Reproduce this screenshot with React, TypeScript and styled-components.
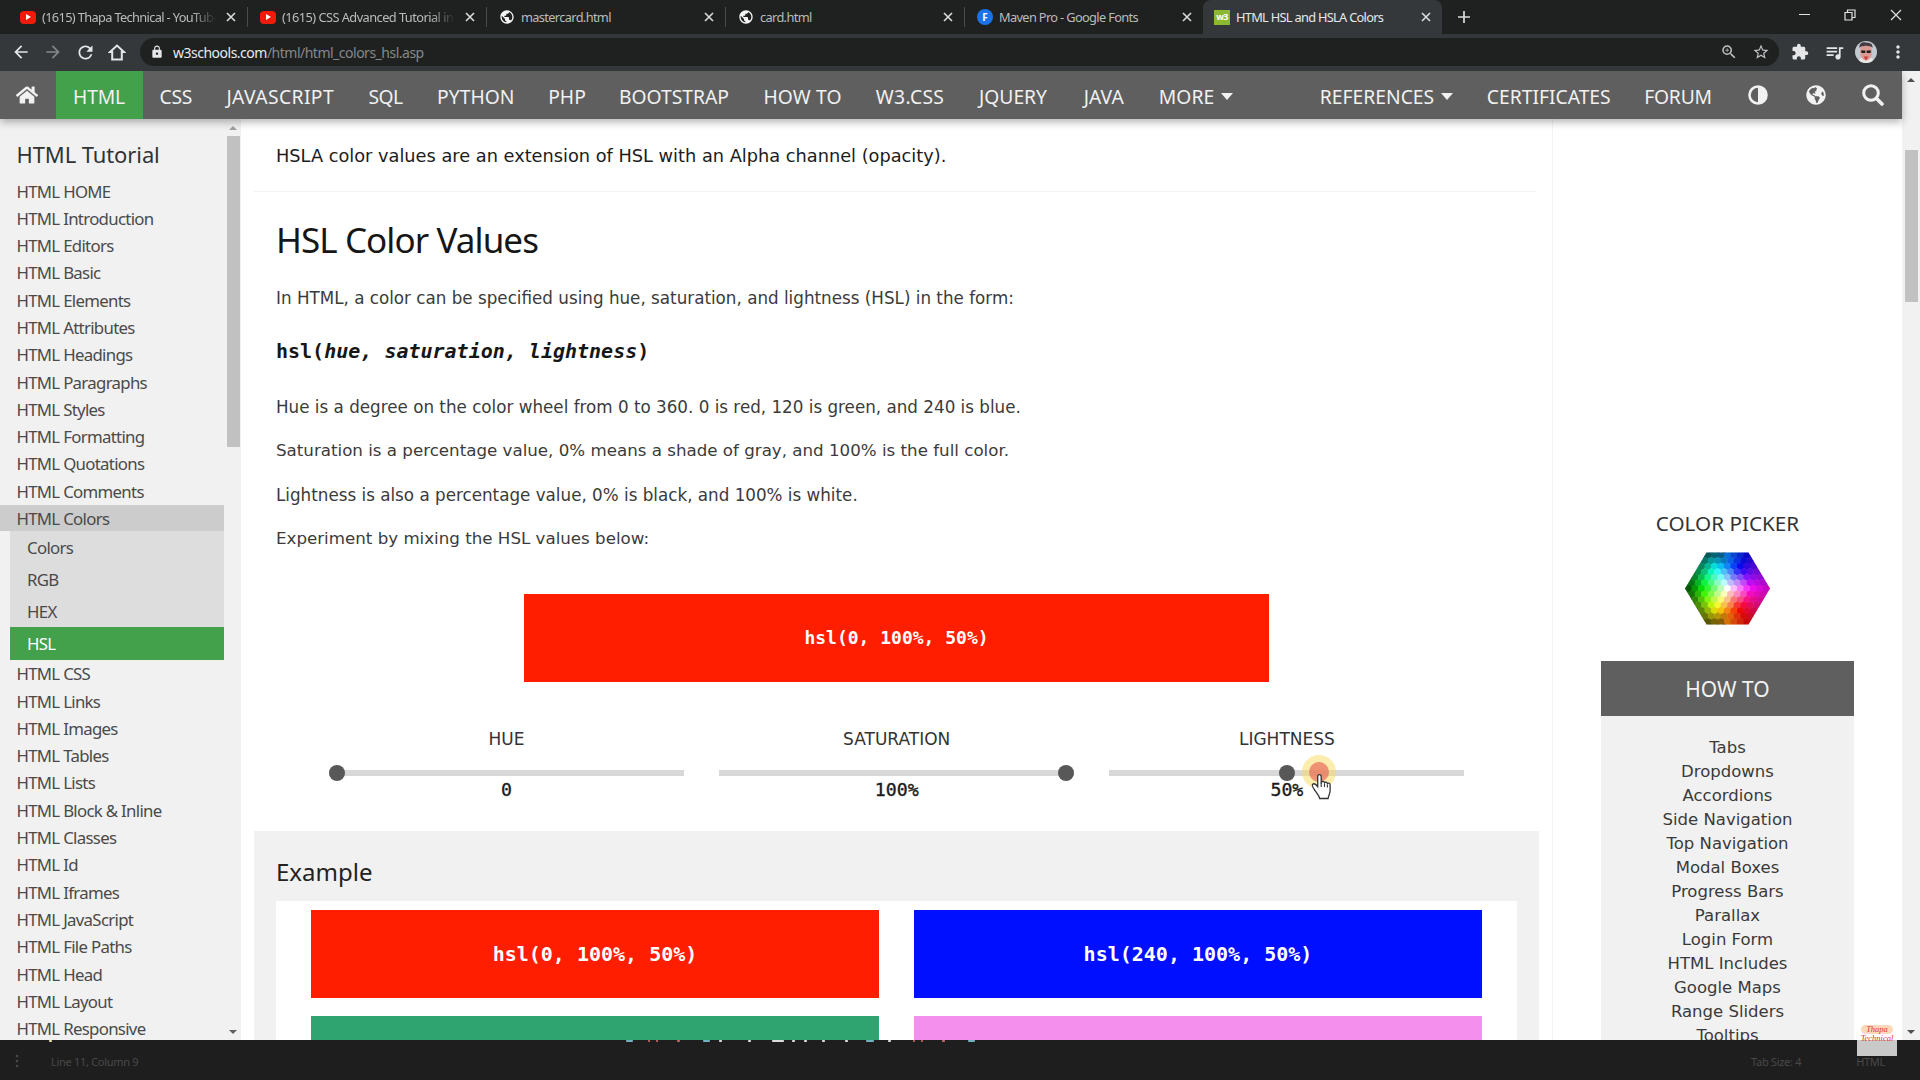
import React from 'react';
import styled, { createGlobalStyle } from 'styled-components';
import {
  MdArrowBack,
  MdArrowForward,
  MdRefresh,
  MdLock,
  MdZoomIn,
  MdStarBorder,
  MdExtension,
  MdQueueMusic,
  MdMoreVert,
  MdPublic,
} from 'react-icons/md';
import { FaHome, FaGlobeAmericas } from 'react-icons/fa';

const ui = '"Noto Sans", "Open Sans", sans-serif';
const body = '"DejaVu Sans", Verdana, sans-serif';
const mono = '"DejaVu Sans Mono", Consolas, monospace';

const Global = createGlobalStyle`
  * { box-sizing: border-box; }
  html, body { margin: 0; padding: 0; background: #1e1e1e; }
  body { overflow: hidden; }
`;

const Screen = styled.div`
  position: relative;
  width: 1920px;
  height: 1080px;
  display: flex;
  flex-direction: column;
  overflow: hidden;
  background: #1e1e1e;
  font-family: ${ui};
`;

/* ---------- browser chrome ---------- */

const TabStrip = styled.div`
  height: 34px;
  flex: none;
  display: flex;
  background: #1f2120;
  color: #c4c7c8;
`;

const Tab = styled.div<{ $active?: boolean; $first?: boolean }>`
  width: ${(p) => (p.$first ? 247 : p.$active ? 239 : 238)}px;
  height: 34px;
  display: flex;
  align-items: center;
  padding: 0 11px 0 ${(p) => (p.$first ? 20 : p.$active ? 11 : 12)}px;
  background: ${(p) => (p.$active ? '#35383b' : 'transparent')};
  border-radius: ${(p) => (p.$active ? '8px 8px 0 0' : '0')};
  color: ${(p) => (p.$active ? '#e6e8e9' : '#b9bcbd')};
`;

const TabIcon = styled.span`
  width: 16px;
  height: 16px;
  flex: none;
  display: flex;
  align-items: center;
  justify-content: center;
`;

const TabTitle = styled.span<{ $fade?: boolean; $ls?: number }>`
  flex: 1;
  margin: 0 10px 1px 6px;
  overflow: hidden;
  white-space: nowrap;
  font-size: 12.8px;
  line-height: 20px;
  letter-spacing: ${(p) => p.$ls ?? -0.65}px;
  ${(p) => p.$fade && 'mask-image: linear-gradient(90deg, #000 86%, transparent 100%);'}
`;

const TabDivider = styled.span`
  width: 1px;
  height: 20px;
  align-self: center;
  background: #484b4d;
`;

const YouTube = styled.span`
  width: 16px;
  height: 13px;
  border-radius: 4px;
  background: #f31a0c;
  display: flex;
  align-items: center;
  justify-content: center;
  &::after {
    content: '';
    border-left: 5px solid #fff;
    border-top: 3px solid transparent;
    border-bottom: 3px solid transparent;
  }
`;

const FontsBadge = styled.span`
  width: 16px;
  height: 16px;
  border-radius: 8px;
  background: #1a73e8;
  color: #fff;
  font: 700 10px/16px ${ui};
  text-align: center;
`;

const W3Badge = styled.span`
  width: 16px;
  height: 15px;
  background: #8cb832;
  color: #fff;
  font: 700 9px/14px ${ui};
  letter-spacing: -0.6px;
  text-align: center;
`;

const NewTab = styled.div`
  width: 44px;
  display: flex;
  align-items: center;
  justify-content: center;
`;

const WindowButtons = styled.div`
  margin-left: auto;
  display: flex;
  height: 29px;
  padding-right: 1px;
`;

const WindowButton = styled.span`
  width: 46px;
  display: flex;
  align-items: center;
  justify-content: center;
`;

const Toolbar = styled.div`
  height: 37px;
  flex: none;
  display: flex;
  align-items: center;
  padding: 0 6px 1px 5px;
  background: #35383b;
  color: #e4e6e8;
`;

const ToolButton = styled.span<{ $w?: number; $dim?: boolean }>`
  width: ${(p) => p.$w ?? 32}px;
  display: flex;
  align-items: center;
  justify-content: center;
  color: ${(p) => (p.$dim ? '#84878a' : 'inherit')};
`;

const Omnibox = styled.div`
  width: 1639px;
  height: 28px;
  margin-left: 7px;
  border-radius: 14px;
  background: #1f2120;
  display: flex;
  align-items: center;
  padding: 0 2px 0 10px;
`;

const Url = styled.span`
  margin-left: 9px;
  font-size: 14px;
  letter-spacing: -0.5px;
  color: #85888a;
  b {
    font-weight: 400;
    color: #e8eaed;
  }
`;

const OmniActions = styled.span`
  margin-left: auto;
  display: flex;
  color: #bfc2c4;
`;

/* ---------- page ---------- */

const Page = styled.div`
  height: 969px;
  flex: none;
  display: flex;
  background: #fff;
  overflow: hidden;
`;

const Site = styled.div`
  width: 1902px;
  display: flex;
  flex-direction: column;
`;

const Nav = styled.nav`
  position: relative;
  z-index: 2;
  height: 48px;
  flex: none;
  display: flex;
  background: #5f5f5f;
  color: #f1f1f1;
  box-shadow: 0 3px 8px rgba(0, 0, 0, 0.3);
`;

const NavItem = styled.span<{ $w: number; $active?: boolean; $ls?: number; $icon?: boolean }>`
  width: ${(p) => p.$w}px;
  height: 48px;
  display: flex;
  align-items: center;
  justify-content: center;
  padding-top: ${(p) => (p.$icon ? 0 : 2)}px;
  background: ${(p) => (p.$active ? '#43a04b' : 'transparent')};
  font-size: 19.3px;
  letter-spacing: ${(p) => p.$ls ?? 0}px;
  white-space: nowrap;
`;

const HomeItem = styled(NavItem)`
  padding-right: 2px;
`;

const Caret = styled.span`
  margin: 1px 0 0 7px;
  border-top: 7px solid #f1f1f1;
  border-left: 6px solid transparent;
  border-right: 6px solid transparent;
`;

const Spacer = styled.span`
  flex: 1;
`;

const Columns = styled.div`
  flex: 1;
  display: flex;
  min-height: 0;
`;

const Sidebar = styled.aside`
  width: 241px;
  flex: none;
  display: flex;
  background: #f1f1f1;
  overflow: hidden;
`;

const Menu = styled.div`
  width: 224px;
  padding-top: 20px;
  flex: none;
`;

const MenuTitle = styled.h2`
  margin: 0;
  padding-left: 16.5px;
  height: 38.5px;
  font: 400 22px/30px ${ui};
  letter-spacing: -0.1px;
  color: #333;
`;

const MenuItem = styled.a<{ $current?: boolean }>`
  display: block;
  height: ${(p) => (p.$current ? 25.5 : 27.3)}px;
  padding-left: 16.4px;
  font-size: 16.8px;
  line-height: 27px;
  letter-spacing: -0.68px;
  white-space: nowrap;
  color: #4a4a4a;
  background: ${(p) => (p.$current ? '#cccccc' : 'transparent')};
`;

const SubMenu = styled.div`
  margin: 0 0 0.5px 10px;
  background: #dddddd;
`;

const SubItem = styled.a<{ $active?: boolean }>`
  display: block;
  height: 32.3px;
  padding-left: 17px;
  font-size: 16.8px;
  line-height: 33px;
  letter-spacing: -0.68px;
  color: ${(p) => (p.$active ? '#fff' : '#4a4a4a')};
  background: ${(p) => (p.$active ? '#43a04b' : 'transparent')};
`;

const ScrollTrack = styled.div<{ $w: number; $top: number }>`
  width: ${(p) => p.$w}px;
  flex: none;
  margin-left: auto;
  padding-top: ${(p) => p.$top}px;
  padding-bottom: 6px;
  display: flex;
  flex-direction: column;
  align-items: center;
  background: #f1f1f1;
`;

const ScrollArrow = styled.span<{ $down?: boolean; $color: string }>`
  border-left: 4px solid transparent;
  border-right: 4px solid transparent;
  ${(p) =>
    p.$down
      ? `border-top: 4px solid ${p.$color}; margin-top: auto;`
      : `border-bottom: 4px solid ${p.$color};`}
`;

const ScrollThumb = styled.span<{ $w: number; $h: number; $gap: number }>`
  width: ${(p) => p.$w}px;
  height: ${(p) => p.$h}px;
  margin-top: ${(p) => p.$gap}px;
  background: #c1c1c1;
`;

const Main = styled.main`
  width: 1312px;
  flex: none;
  padding-left: 13px;
  border-right: 1px solid #f3f3f3;
  display: flex;
  flex-direction: column;
  overflow: hidden;
`;

const Para = styled.p<{ $gap: number; $size?: number; $ls?: number; $dark?: boolean }>`
  flex: none;
  height: 28px;
  margin: ${(p) => p.$gap}px 0 0;
  padding-left: 22px;
  font: 400 ${(p) => p.$size ?? 16.75}px/28px ${body};
  letter-spacing: ${(p) => p.$ls ?? 0}px;
  color: ${(p) => (p.$dark ? '#1c1c1c' : '#3b3b3b')};
  white-space: nowrap;
`;

const Rule = styled.div`
  flex: none;
  width: 1282px;
  height: 1px;
  margin-top: 21px;
  background: #f3f3f3;
`;

const Heading = styled.h2`
  flex: none;
  height: 44px;
  margin: 26px 0 0;
  padding-left: 22px;
  font: 400 35px/44px ${ui};
  letter-spacing: -0.92px;
  color: #161616;
`;

const Syntax = styled.div`
  flex: none;
  height: 28px;
  margin-top: 26px;
  padding-left: 22px;
  font: 700 20px/26px ${mono};
  color: #161616;
`;

const Swatch = styled.div<{ $color: string; $size: number }>`
  height: 88px;
  display: flex;
  align-items: center;
  justify-content: center;
  background: ${(p) => p.$color};
  color: #fff;
  font: 700 ${(p) => p.$size}px/24px ${mono};
`;

const Result = styled.div`
  flex: none;
  width: 745px;
  margin: 41px 0 0 270px;
`;

const Sliders = styled.div`
  flex: none;
  display: grid;
  grid-template-columns: repeat(3, 355px);
  column-gap: 35.2px;
  margin: 43px 0 0 75px;
`;

const SliderCell = styled.div`
  display: flex;
  flex-direction: column;
  align-items: center;
`;

const SliderLabel = styled.div`
  height: 28px;
  font: 400 17px/29px ${body};
  color: #333;
`;

const SliderTrack = styled.div`
  position: relative;
  width: 355px;
  height: 6px;
  margin: 17px 0 5px;
  background: #d8d8d8;
`;

const Thumb = styled.span<{ $pos: number }>`
  position: absolute;
  top: -5px;
  left: calc((100% - 16px) * ${(p) => p.$pos});
  width: 16px;
  height: 16px;
  border-radius: 50%;
  background: #585858;
`;

const SliderValue = styled.div`
  height: 18px;
  font: 400 18.2px/18px ${mono};
  -webkit-text-stroke: 0.35px #1a1a1a;
  color: #1a1a1a;
`;

const Example = styled.section`
  flex: none;
  width: 1285px;
  height: 260px;
  margin-top: 32px;
  padding: 26px 22px 0;
  background: #f1f1f1;
`;

const ExampleTitle = styled.h3`
  height: 44px;
  margin: 0;
  font: 400 24px/29px ${ui};
  color: #222;
`;

const SwatchGrid = styled.div`
  display: grid;
  grid-template-columns: 568px 568px;
  gap: 18px 35px;
  height: 200px;
  padding: 9px 35px;
  background: #fff;
`;

const Aside = styled.aside`
  flex: 1;
  display: flex;
  flex-direction: column;
  align-items: center;
  padding-top: 389px;
`;

const AsideTitle = styled.div`
  height: 30px;
  font: 400 20.7px/30px ${ui};
  color: #333;
`;

const ColorWheel = styled.div`
  margin-top: 14px;
  height: 74px;
`;

const HowTo = styled.div`
  width: 253px;
  margin-top: 35px;
  background: #f1f1f1;
  text-align: center;
`;

const HowToTitle = styled.div`
  height: 55px;
  margin-bottom: 20px;
  background: #5f5f5f;
  color: #f1f1f1;
  font: 400 21px/56px ${ui};
`;

const HowToLink = styled.a`
  display: block;
  height: 24.02px;
  font: 400 16.5px/24px ${body};
  color: #3a3a3a;
`;

/* ---------- editor status bar under the browser window ---------- */

const StatusBar = styled.div`
  height: 40px;
  flex: none;
  display: flex;
  align-items: center;
  padding: 2px 35px 0 15px;
  color: #494949;
`;

const StatusText = styled.span<{ $ml: number }>`
  margin-left: ${(p) => p.$ml}px;
  font-size: 11px;
  letter-spacing: -0.3px;
`;

const CodeEdge = styled.svg`
  position: absolute;
  left: 0;
  top: 1039px;
`;

const Pointer = styled.svg`
  position: absolute;
  left: 1299px;
  top: 751px;
`;

const Watermark = styled.div`
  position: absolute;
  left: 1857px;
  top: 1020px;
  width: 40px;
  height: 36px;
  display: flex;
  flex-direction: column;
  align-items: center;
  padding-top: 5px;
  background: rgba(255, 255, 255, 0.76);
  color: #e0342c;
  font: italic 400 8.5px/9px "Liberation Serif", serif;
`;

const BrushLine = styled.span`
  width: 32px;
  text-align: center;
  border-radius: 5px;
  background: #fbd9b8;
`;

const CloseIcon = () => (
  <svg width="10" height="10" viewBox="0 0 10 10" stroke="#dadcde" strokeWidth="1.6">
    <path d="M1 1L9 9M9 1L1 9" />
  </svg>
);

const cellColor = (x: number, y: number) => {
  const angle = (Math.atan2(y, x) * 180) / Math.PI;
  const hue = (300 + angle + 360) % 360;
  const r = Math.min(1, Math.hypot(x, y) / 6);
  const edge = x < 0 ? 18 : 40;
  const light = r < 0.6 ? 100 - (r / 0.6) * 50 : 50 - ((r - 0.6) / 0.4) * (50 - edge);
  return `hsl(${hue}, 92%, ${light}%)`;
};

const HexMap = () => {
  const cells: React.ReactNode[] = [];
  for (let row = -7; row <= 7; row++) {
    const count = 15 - Math.abs(row);
    for (let i = 0; i < count; i++) {
      const gx = i - (count - 1) / 2;
      const gy = row * 0.866;
      const cx = 42.5 + gx * 6.5;
      const cy = 36.5 + row * 5.55;
      cells.push(
        <path
          key={`${row}:${i}`}
          d={`M${cx} ${cy - 3.9}l3.500 1.950v3.900l-3.500 1.950l-3.500-1.950v-3.900z`}
          fill={cellColor(gx, gy)}
        />,
      );
    }
  }
  return (
    <svg width="85" height="73" viewBox="0 0 85 73">
      <clipPath id="hexagon">
        <path d="M21.500 0.500H63.500L85 36.500L63.500 72.500H21.500L0 36.500z" />
      </clipPath>
      <g clipPath="url(#hexagon)">{cells}</g>
    </svg>
  );
};

const menuTop = [
  'HTML HOME', 'HTML Introduction', 'HTML Editors', 'HTML Basic', 'HTML Elements', 'HTML Attributes',
  'HTML Headings', 'HTML Paragraphs', 'HTML Styles', 'HTML Formatting', 'HTML Quotations', 'HTML Comments',
];
const menuBottom = [
  'HTML CSS', 'HTML Links', 'HTML Images', 'HTML Tables', 'HTML Lists', 'HTML Block & Inline', 'HTML Classes',
  'HTML Id', 'HTML Iframes', 'HTML JavaScript', 'HTML File Paths', 'HTML Head', 'HTML Layout', 'HTML Responsive',
];
const howTo = [
  'Tabs', 'Dropdowns', 'Accordions', 'Side Navigation', 'Top Navigation', 'Modal Boxes', 'Progress Bars',
  'Parallax', 'Login Form', 'HTML Includes', 'Google Maps', 'Range Sliders', 'Tooltips',
];
const navItems: [string, number, number][] = [
  ['CSS', 66.5, -0.3], ['JAVASCRIPT', 142.5, 0.4], ['SQL', 68, -0.5], ['PYTHON', 112.5, 0], ['PHP', 70, 0],
  ['BOOTSTRAP', 144, 0], ['HOW TO', 113, 0.1], ['W3.CSS', 102, 0.3], ['JQUERY', 104, 0], ['JAVA', 77.5, 0],
];
const sliders: [string, string, number][] = [
  ['HUE', '0', 0], ['SATURATION', '100%', 1], ['LIGHTNESS', '50%', 0.5],
];
const edgeMarks: [number, number, string][] = [
  [626, 7, '#6fb3c0'], [648, 2, '#c66'], [656, 2, '#c66'], [677, 3, '#c66'], [703, 7, '#6fb3c0'], [719, 3, '#ddd'],
  [748, 3, '#ddd'], [772, 12, '#ddd'], [792, 3, '#ddd'], [804, 3, '#ddd'], [822, 3, '#ddd'], [845, 3, '#ddd'],
  [866, 8, '#6fb3c0'], [888, 3, '#ddd'], [913, 2, '#c66'], [921, 2, '#c66'], [942, 3, '#c66'], [968, 7, '#6fb3c0'],
  [49, 3, '#e8e0a8'],
];

export default function App() {
  return (
    <Screen>
      <Global />
      <TabStrip>
        <Tab $first>
          <TabIcon><YouTube /></TabIcon>
          <TabTitle $fade>(1615) Thapa Technical - YouTube</TabTitle>
          <CloseIcon />
        </Tab>
        <TabDivider />
        <Tab>
          <TabIcon><YouTube /></TabIcon>
          <TabTitle $fade $ls={-0.55}>(1615) CSS Advanced Tutorial in H</TabTitle>
          <CloseIcon />
        </Tab>
        <TabDivider />
        <Tab>
          <TabIcon><MdPublic size={18} color="#f4f4f4" /></TabIcon>
          <TabTitle>mastercard.html</TabTitle>
          <CloseIcon />
        </Tab>
        <TabDivider />
        <Tab>
          <TabIcon><MdPublic size={18} color="#f4f4f4" /></TabIcon>
          <TabTitle>card.html</TabTitle>
          <CloseIcon />
        </Tab>
        <TabDivider />
        <Tab>
          <TabIcon><FontsBadge>F</FontsBadge></TabIcon>
          <TabTitle>Maven Pro - Google Fonts</TabTitle>
          <CloseIcon />
        </Tab>
        <Tab $active>
          <TabIcon><W3Badge>w3</W3Badge></TabIcon>
          <TabTitle $ls={-0.7}>HTML HSL and HSLA Colors</TabTitle>
          <CloseIcon />
        </Tab>
        <NewTab>
          <svg width="12" height="12" viewBox="0 0 12 12" stroke="#dadcde" strokeWidth="1.7">
            <path d="M6 0V12M0 6H12" />
          </svg>
        </NewTab>
        <WindowButtons>
          <WindowButton>
            <svg width="11" height="11" viewBox="0 0 11 11" stroke="#e2e2e2"><path d="M0 5.5H11" /></svg>
          </WindowButton>
          <WindowButton>
            <svg width="12" height="12" viewBox="0 0 12 12" stroke="#e2e2e2" fill="none" strokeWidth="1.2">
              <path d="M1 3.5H8V11H1zM3.5 3.5V1H11V8.5H8" />
            </svg>
          </WindowButton>
          <WindowButton>
            <svg width="12" height="12" viewBox="0 0 12 12" stroke="#e2e2e2" strokeWidth="1.2">
              <path d="M1 1L11 11M11 1L1 11" />
            </svg>
          </WindowButton>
        </WindowButtons>
      </TabStrip>

      <Toolbar>
        <ToolButton><MdArrowBack size={20} /></ToolButton>
        <ToolButton $dim><MdArrowForward size={20} /></ToolButton>
        <ToolButton><MdRefresh size={21} /></ToolButton>
        <ToolButton>
          <svg width="18" height="17" viewBox="0 0 18 17" fill="none" stroke="#e4e6e8" strokeWidth="2">
            <path d="M4.2 8V15.6H13.8V8H16L9 1.6L2 8z" />
          </svg>
        </ToolButton>
        <Omnibox>
          <MdLock size={14} />
          <Url><b>w3schools.com</b>/html/html_colors_hsl.asp</Url>
          <OmniActions>
            <ToolButton><MdZoomIn size={18} /></ToolButton>
            <ToolButton><MdStarBorder size={18} /></ToolButton>
          </OmniActions>
        </Omnibox>
        <ToolButton $w={42}><MdExtension size={18} /></ToolButton>
        <ToolButton $w={26}><MdQueueMusic size={21} /></ToolButton>
        <ToolButton $w={38}>
          <svg width="22" height="22" viewBox="0 0 22 22">
            <clipPath id="face"><circle cx="11" cy="11" r="11" /></clipPath>
            <g clipPath="url(#face)">
              <rect width="22" height="22" fill="#c3c9d0" />
              <path d="M3 22C4 17 7 16 11 16s7 1 8 6z" fill="#e9e6e6" />
              <ellipse cx="11" cy="11" rx="6" ry="8.5" fill="#dc9a92" />
              <path d="M4.500 7C4 1.500 8 1 11 1.500s7 0 6.500 5.500C16 4 6 4 4.500 7z" fill="#473b42" />
              <path d="M6 9.500h4.300v2.600H6.600zM11.700 9.500H16l-.6 2.600h-3.700z" fill="#1d1a20" />
              <path d="M8.500 15.500h5L11 19.500z" fill="#cc3f38" />
            </g>
          </svg>
        </ToolButton>
        <ToolButton $w={26}><MdMoreVert size={20} /></ToolButton>
      </Toolbar>

      <Page>
        <Site>
          <Nav>
            <HomeItem $w={55.5} $icon><FaHome size={22} /></HomeItem>
            <NavItem $w={87} $active $ls={-0.2}>HTML</NavItem>
            {navItems.map(([label, w, ls]) => (
              <NavItem key={label} $w={w} $ls={ls}>{label}</NavItem>
            ))}
            <NavItem $w={107}>MORE<Caret /></NavItem>
            <Spacer />
            <NavItem $w={168}>REFERENCES<Caret /></NavItem>
            <NavItem $w={156.5}>CERTIFICATES</NavItem>
            <NavItem $w={102} $ls={-0.2}>FORUM</NavItem>
            <NavItem $w={58.5} $icon>
              <svg width="20" height="20" viewBox="0 0 20 20">
                <circle cx="10" cy="10" r="8.5" fill="none" stroke="#f1f1f1" strokeWidth="2.600" />
                <path d="M10 1a9 9 0 0 1 0 18z" fill="#f1f1f1" />
              </svg>
            </NavItem>
            <NavItem $w={57} $icon><FaGlobeAmericas size={20} /></NavItem>
            <NavItem $w={57.5} $icon>
              <svg width="22" height="22" viewBox="0 0 22 22" fill="none" stroke="#f1f1f1">
                <circle cx="9" cy="9" r="7.300" strokeWidth="3" />
                <path d="M14.500 14.500L20 20" strokeWidth="3.600" strokeLinecap="round" />
              </svg>
            </NavItem>
          </Nav>

          <Columns>
            <Sidebar>
              <Menu>
                <MenuTitle>HTML Tutorial</MenuTitle>
                {menuTop.map((t) => <MenuItem key={t}>{t}</MenuItem>)}
                <MenuItem $current>HTML Colors</MenuItem>
                <SubMenu>
                  <SubItem>Colors</SubItem>
                  <SubItem>RGB</SubItem>
                  <SubItem>HEX</SubItem>
                  <SubItem $active>HSL</SubItem>
                </SubMenu>
                {menuBottom.map((t) => <MenuItem key={t}>{t}</MenuItem>)}
              </Menu>
              <ScrollTrack $w={16} $top={7}>
                <ScrollArrow $color="#a0a0a0" />
                <ScrollThumb $w={13} $h={311} $gap={6} />
                <ScrollArrow $color="#606060" $down />
              </ScrollTrack>
            </Sidebar>

            <Main>
              <Para $gap={23} $size={17.76} $dark>
                HSLA color values are an extension of HSL with an Alpha channel (opacity).
              </Para>
              <Rule />
              <Heading>HSL Color Values</Heading>
              <Para $gap={22}>
                In HTML, a color can be specified using hue, saturation, and lightness (HSL) in the form:
              </Para>
              <Syntax>hsl(<i>hue, saturation, lightness</i>)</Syntax>
              <Para $gap={27}>
                Hue is a degree on the color wheel from 0 to 360. 0 is red, 120 is green, and 240 is blue.
              </Para>
              <Para $gap={16} $size={16.68}>
                Saturation is a percentage value, 0% means a shade of gray, and 100% is the full color.
              </Para>
              <Para $gap={16}>Lightness is also a percentage value, 0% is black, and 100% is white.</Para>
              <Para $gap={16} $size={16.68}>Experiment by mixing the HSL values below:</Para>
              <Result>
                <Swatch $color="#ff1e00" $size={18}>hsl(0, 100%, 50%)</Swatch>
              </Result>
              <Sliders>
                {sliders.map(([label, value, pos]) => (
                  <SliderCell key={label}>
                    <SliderLabel>{label}</SliderLabel>
                    <SliderTrack><Thumb $pos={pos} /></SliderTrack>
                    <SliderValue>{value}</SliderValue>
                  </SliderCell>
                ))}
              </Sliders>
              <Example>
                <ExampleTitle>Example</ExampleTitle>
                <SwatchGrid>
                  <Swatch $color="#ff1e00" $size={20}>hsl(0, 100%, 50%)</Swatch>
                  <Swatch $color="#000fff" $size={20}>hsl(240, 100%, 50%)</Swatch>
                  <Swatch $color="#2fa470" $size={20} />
                  <Swatch $color="#f48fee" $size={20} />
                </SwatchGrid>
              </Example>
            </Main>

            <Aside>
              <AsideTitle>COLOR PICKER</AsideTitle>
              <ColorWheel><HexMap /></ColorWheel>
              <HowTo>
                <HowToTitle>HOW TO</HowToTitle>
                {howTo.map((t) => <HowToLink key={t}>{t}</HowToLink>)}
              </HowTo>
            </Aside>
          </Columns>
        </Site>
        <ScrollTrack $w={18} $top={7}>
          <ScrollArrow $color="#505050" />
          <ScrollThumb $w={13} $h={152} $gap={68} />
          <ScrollArrow $color="#505050" $down />
        </ScrollTrack>
      </Page>

      <StatusBar>
        <svg width="4" height="14" viewBox="0 0 4 14" fill="#494949">
          <circle cx="2" cy="2" r="1.300" /><circle cx="2" cy="7" r="1.300" /><circle cx="2" cy="12" r="1.300" />
        </svg>
        <StatusText $ml={32}>Line 11, Column 9</StatusText>
        <Spacer />
        <StatusText $ml={0}>Tab Size: 4</StatusText>
        <StatusText $ml={55}>HTML</StatusText>
      </StatusBar>

      <CodeEdge width="1000" height="4" viewBox="0 0 1000 4">
        {edgeMarks.map(([x, w, c]) => (
          <rect key={x} x={x} y="1" width={w} height="2" rx="0.800" fill={c} />
        ))}
      </CodeEdge>

      <Pointer width="40" height="50" viewBox="0 0 40 50">
        <circle cx="20" cy="21" r="17" fill="#f7dc5c" opacity="0.5" />
        <circle cx="20" cy="21" r="10" fill="#ea6a5c" opacity="0.7" />
        <path
          d="M18.700 25.500c0-2.600 3.500-2.600 3.500 0v7l.4-1.500c.8-1.100 2.700-.8 2.900.7.800-1 2.600-.7 2.900.8.900-.8 2.700-.3 2.700 1.400v6.200c0 3-1.800 4.400-2 7.400h-8.400c-.5-3-3-5.200-5.200-8.700-1.700-2.600-3.100-4.700-1.700-5.700 1.800-1.200 3.500.6 4.900 2.600z"
          fill="#fff"
          stroke="#333"
          strokeWidth="1.300"
        />
        <path d="M22.200 32v4M25.500 32.500v3.500M28.400 33.500v3" stroke="#333" strokeWidth="1.100" />
      </Pointer>

      <Watermark>
        <BrushLine>Thapa</BrushLine>
        <span>Technical</span>
      </Watermark>
    </Screen>
  );
}
